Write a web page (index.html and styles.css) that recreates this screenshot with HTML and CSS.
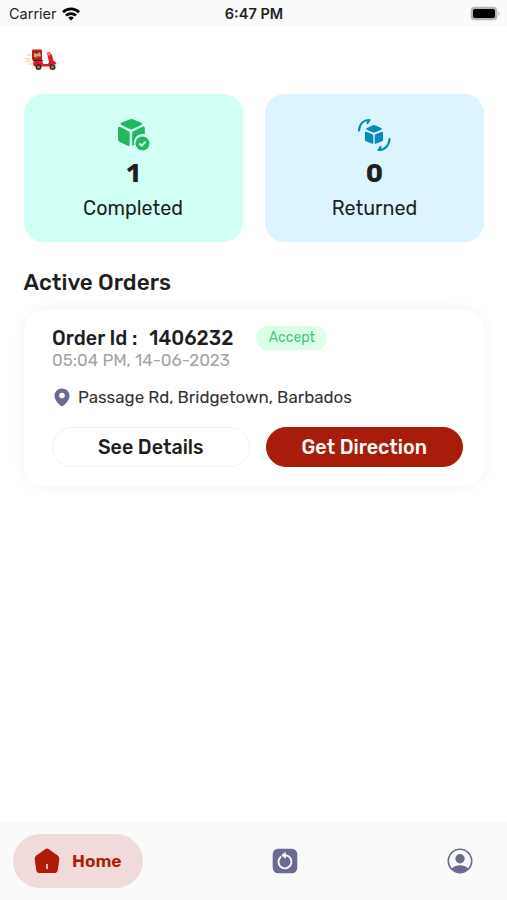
FILE: index.html
```html
<!DOCTYPE html>
<html lang="en">
<head>
    <meta charset="UTF-8">
    <meta name="viewport" content="width=device-width, initial-scale=1.0">
    <title>Delivery - Home</title>
    <link rel="stylesheet" href="styles.css">
</head>
<body>
    <div class="status-bar">
        <div class="carrier">
            <span>Carrier</span>
            <svg width="18" height="14" viewBox="0 0 18 14" fill="none" stroke="#000" stroke-width="2.8">
                <path d="M1 5.2a11.3 11.3 0 0 1 16 0"/>
                <path d="M4 8.6a7.1 7.1 0 0 1 10 0"/>
                <path d="M9 13.6 6.2 10.8a4 4 0 0 1 5.6 0z" fill="#000" stroke="none"/>
            </svg>
        </div>
        <span class="time">6:47 PM</span>
        <svg class="battery" width="31" height="15" viewBox="0 0 31 15">
            <rect x=".7" y=".7" width="26.6" height="13.6" rx="4" fill="#b5b5b5"/>
            <path d="M28.3 5q2.4 2.5 0 5z" fill="#b5b5b5"/>
            <rect x="3" y="3" width="22" height="9" rx="1.8" fill="#000"/>
        </svg>
    </div>

    <header class="header">
        <svg width="34" height="24" viewBox="0 0 34 24">
            <path d="M3 7h4M1 10.500h5M2 13h5M4 16h4" stroke="#f5c98a" stroke-width="1"/>
            <path d="M10 13h8l1.500 3h4.500l1-2-1.500-7-1-2 3-1 2.500 3 1.500 6q3 1 3 3.500l-3-.5-2.500 2.500H12q-3 0-3-3z" fill="#e3192c"/>
            <rect x="8" y="1.500" width="10" height="10.500" rx="1" fill="#b52219"/>
            <path d="M10 5l3 1 3-2 1 4-3 2-4-1z" fill="#d9a684"/>
            <path d="M11 4h3M12 9h4" stroke="#6d2a18"/>
            <path d="M9 12.500h10" stroke="#5a1712" stroke-width="1.200"/>
            <path d="M23.500 6l3 .5" stroke="#f0a62c" stroke-width="2"/>
            <g fill="#8d8262" stroke="#3b2420" stroke-width="1.400">
                <circle cx="14.500" cy="19" r="2.300"/>
                <circle cx="28.500" cy="19" r="2.300"/>
            </g>
        </svg>
    </header>

    <main class="content">
        <div class="stats">
            <div class="stat-card completed">
                <svg width="34" height="34" viewBox="0 0 34 34" fill="#1fb85c">
                    <path d="M14.200 1.300q1.300-.5 2.600 0l8.400 3.500q2 1 0 2.100l-9 4.400q-.9.400-1.800 0L5.300 6.900q-1.800-1.100 0-2.100z"/>
                    <path d="M2.500 9.300q.6-.8 1.800-.2l8.300 4.200q1.100.6 1.100 1.900v11.600q-.2 1.600-1.800.9l-8.100-3.700Q2.100 23.200 2 21.500V11.200q0-1.200.5-1.900z"/>
                    <path d="M16.200 15q0-1.200 1.100-1.800l9.300-4.500q1.800-.6 2.200 1.300v6q-9.500-1-10.800 7.500-.1 2 .5 3.300l-2.300 1z"/>
                    <circle cx="26.500" cy="25.500" r="7"/>
                    <path d="M23.300 25.500l2.300 2.200 4-4" fill="none" stroke="#d2fff5" stroke-width="2"/>
                </svg>
                <strong>1</strong>
                <span>Completed</span>
            </div>
            <div class="stat-card returned">
                <svg width="34" height="34" viewBox="0 0 34 34" fill="#078cb8">
                    <path d="M16.200 7.200q.8-.3 1.600 0l6.400 2.900q1.500.8 0 1.600l-6.400 2.700q-.8.300-1.600 0l-6.400-2.700q-1.500-.8 0-1.600z"/>
                    <path d="M8 14q.4-.6 1.200-.2l6.200 2.500q.9.400.9 1.300v7.500q-.1 1.100-1.100.7L9 23.200q-1.100-.4-1.100-1.500z"/>
                    <path d="M26 14q-.4-.6-1.200-.2l-6.200 2.500q-.9.400-.9 1.300v7.500q.1 1.100 1.100.7l6.200-2.600q1.100-.4 1.100-1.500z"/>
                    <g fill="none" stroke="#078cb8" stroke-width="2.200" stroke-linecap="round" stroke-linejoin="round">
                        <path d="M2 12.500C2.500 6 6.500 2 12.500 2L10.500 5"/>
                        <path d="M32.500 21C32 27.500 28 32 21.500 32L23.500 29"/>
                    </g>
                </svg>
                <strong>0</strong>
                <span>Returned</span>
            </div>
        </div>

        <h1>Active Orders</h1>

        <div class="order-card">
            <div class="order-title">
                <h2>Order Id :</h2>
                <span class="order-id">1406232</span>
                <span class="badge">Accept</span>
            </div>
            <p class="order-date">05:04 PM, 14-06-2023</p>
            <div class="address">
                <svg width="16" height="19" viewBox="0 0 16 19">
                    <path d="M8 .5C3.700.5.500 3.700.500 7.800c0 4.400 3.700 7.700 6 9.700q1.500 1.200 3 0c2.300-2 6-5.300 6-9.700C15.500 3.700 12.300.5 8 .5z" fill="#6b6a91"/>
                    <circle cx="8" cy="7.500" r="2.800" fill="#fff"/>
                </svg>
                <span>Passage Rd, Bridgetown, Barbados</span>
            </div>
            <div class="actions">
                <button class="btn btn-details">See Details</button>
                <button class="btn btn-direction">Get Direction</button>
            </div>
        </div>
    </main>

    <nav class="tab-bar">
        <a class="tab active">
            <svg width="26" height="26" viewBox="0 0 26 26">
                <path d="M11.200 1.200q1.800-1.200 3.600 0l8.900 6.400q2 1.500 1.600 3.900l-1.600 10.700q-.5 2.800-3.200 2.800H5.500q-2.700 0-3.200-2.800L.7 11.500Q.3 9.100 2.300 7.600z" fill="#ad1c0b"/>
                <path d="M13 16.500v4" stroke="#f3dada" stroke-width="1.600" stroke-linecap="round"/>
            </svg>
            <span>Home</span>
        </a>
        <a class="tab">
            <svg width="26" height="26" viewBox="0 0 26 26">
                <rect x=".7" y=".7" width="24.600" height="24.600" rx="5.500" fill="#6b6a91"/>
                <path d="M8.600 9A6.500 6.500 0 1 0 13 7.300" fill="none" stroke="#fafafa" stroke-width="1.900" stroke-linecap="round"/>
                <path d="M13.500 4.200v6.200l-3.800-3.100z" fill="#fafafa" stroke="#fafafa" stroke-width=".6" stroke-linejoin="round"/>
            </svg>
        </a>
        <a class="tab">
            <svg width="26" height="26" viewBox="0 0 26 26">
                <circle cx="13" cy="13" r="11.700" fill="none" stroke="#6b6a91" stroke-width="1.600"/>
                <circle cx="13" cy="10.700" r="4.700" fill="#6b6a91"/>
                <path d="M4.800 20.500Q8 17.300 13 17.300t8.200 3.200Q18 24.500 13 24.500t-8.200-4z" fill="#6b6a91"/>
            </svg>
        </a>
    </nav>
</body>
</html>
```
FILE: styles.css
```css
* {
    margin: 0;
    padding: 0;
    box-sizing: border-box;
}

body {
    font-family: Rubik, Roboto, sans-serif;
    height: 900px;
    display: flex;
    flex-direction: column;
    background: #fff;
    color: #1f1f1f;
    overflow: hidden;
}

.status-bar {
    height: 26px;
    padding: 1px 6px 0 9px;
    display: grid;
    grid-template-columns: 1fr auto 1fr;
    align-items: center;
    background: #fafafa;
    font-family: Inter, sans-serif;
    font-size: 14.5px;
}

.carrier {
    display: flex;
    align-items: center;
    gap: 5px;
}

.time {
    margin-right: 2px;
    font-weight: 600;
}

.battery {
    justify-self: end;
}

.header {
    padding: 22px 24px 0;
    height: 68px;
}

.content {
    flex: 1;
    padding: 0 23px 0 23.5px;
}

.stats {
    display: flex;
    gap: 22.5px;
}

.stat-card {
    flex: 1;
    height: 148px;
    padding-top: 24px;
    border-radius: 20px;
    display: flex;
    flex-direction: column;
    align-items: center;
}

.stat-card.completed {
    background: #d2fff5;
}

.stat-card.returned {
    background: #dbf4ff;
}

.stat-card svg {
    margin-left: -1px;
}

.stat-card strong {
    margin-top: 6px;
    font-size: 25.5px;
    font-weight: 700;
    line-height: 31px;
}

.stat-card span {
    margin-top: 8px;
    font-size: 19.7px;
    line-height: 24px;
}

h1 {
    margin-top: 27px;
    font-size: 22.5px;
    font-weight: 500;
    line-height: 28px;
}

.order-card {
    margin-top: 13px;
    height: 176px;
    padding: 16px 21px 0 28.5px;
    border-radius: 20px;
    background: #fff;
    box-shadow: 0 0 18px rgba(30, 30, 80, 0.05);
}

.order-title {
    display: flex;
    align-items: center;
    height: 24px;
    font-size: 19.7px;
    font-weight: 500;
}

h2 {
    font-size: 19.7px;
    font-weight: 500;
}

.order-id {
    margin-left: 12px;
}

.badge {
    width: 71px;
    height: 24px;
    margin-left: 23px;
    border-radius: 12px;
    background: #dcffe8;
    color: #3fc878;
    font-size: 14px;
    font-weight: 400;
    line-height: 24px;
    text-align: center;
}

.order-date {
    font-size: 16.9px;
    line-height: 20px;
    color: #a3a3a3;
}

.address {
    margin-top: 17px;
    padding-left: 2px;
    display: flex;
    align-items: center;
    gap: 8px;
    font-size: 16.9px;
    line-height: 21px;
    color: #333;
}

.actions {
    margin-top: 19px;
    display: flex;
    gap: 16px;
}

.btn {
    flex: 1;
    height: 40px;
    border: 1px solid transparent;
    border-radius: 20px;
    font-family: inherit;
    font-size: 19.7px;
    font-weight: 500;
}

.btn-details {
    border-color: #f1f1f4;
    background: #fff;
    color: #1f1f1f;
}

.btn-direction {
    border-color: #a81c0b;
    background: #a81c0b;
    color: #fff;
}

.tab-bar {
    height: 78px;
    padding: 0 13px;
    display: flex;
    align-items: center;
    justify-content: space-between;
    background: #fafafa;
}

.tab {
    display: flex;
    align-items: center;
    padding: 0 21px;
}

.tab.active {
    width: 130px;
    height: 54px;
    padding-right: 0;
    gap: 12px;
    border-radius: 27px;
    background: #f1dada;
    color: #ad1c0b;
    font-size: 17.5px;
    font-weight: 600;
}
```
